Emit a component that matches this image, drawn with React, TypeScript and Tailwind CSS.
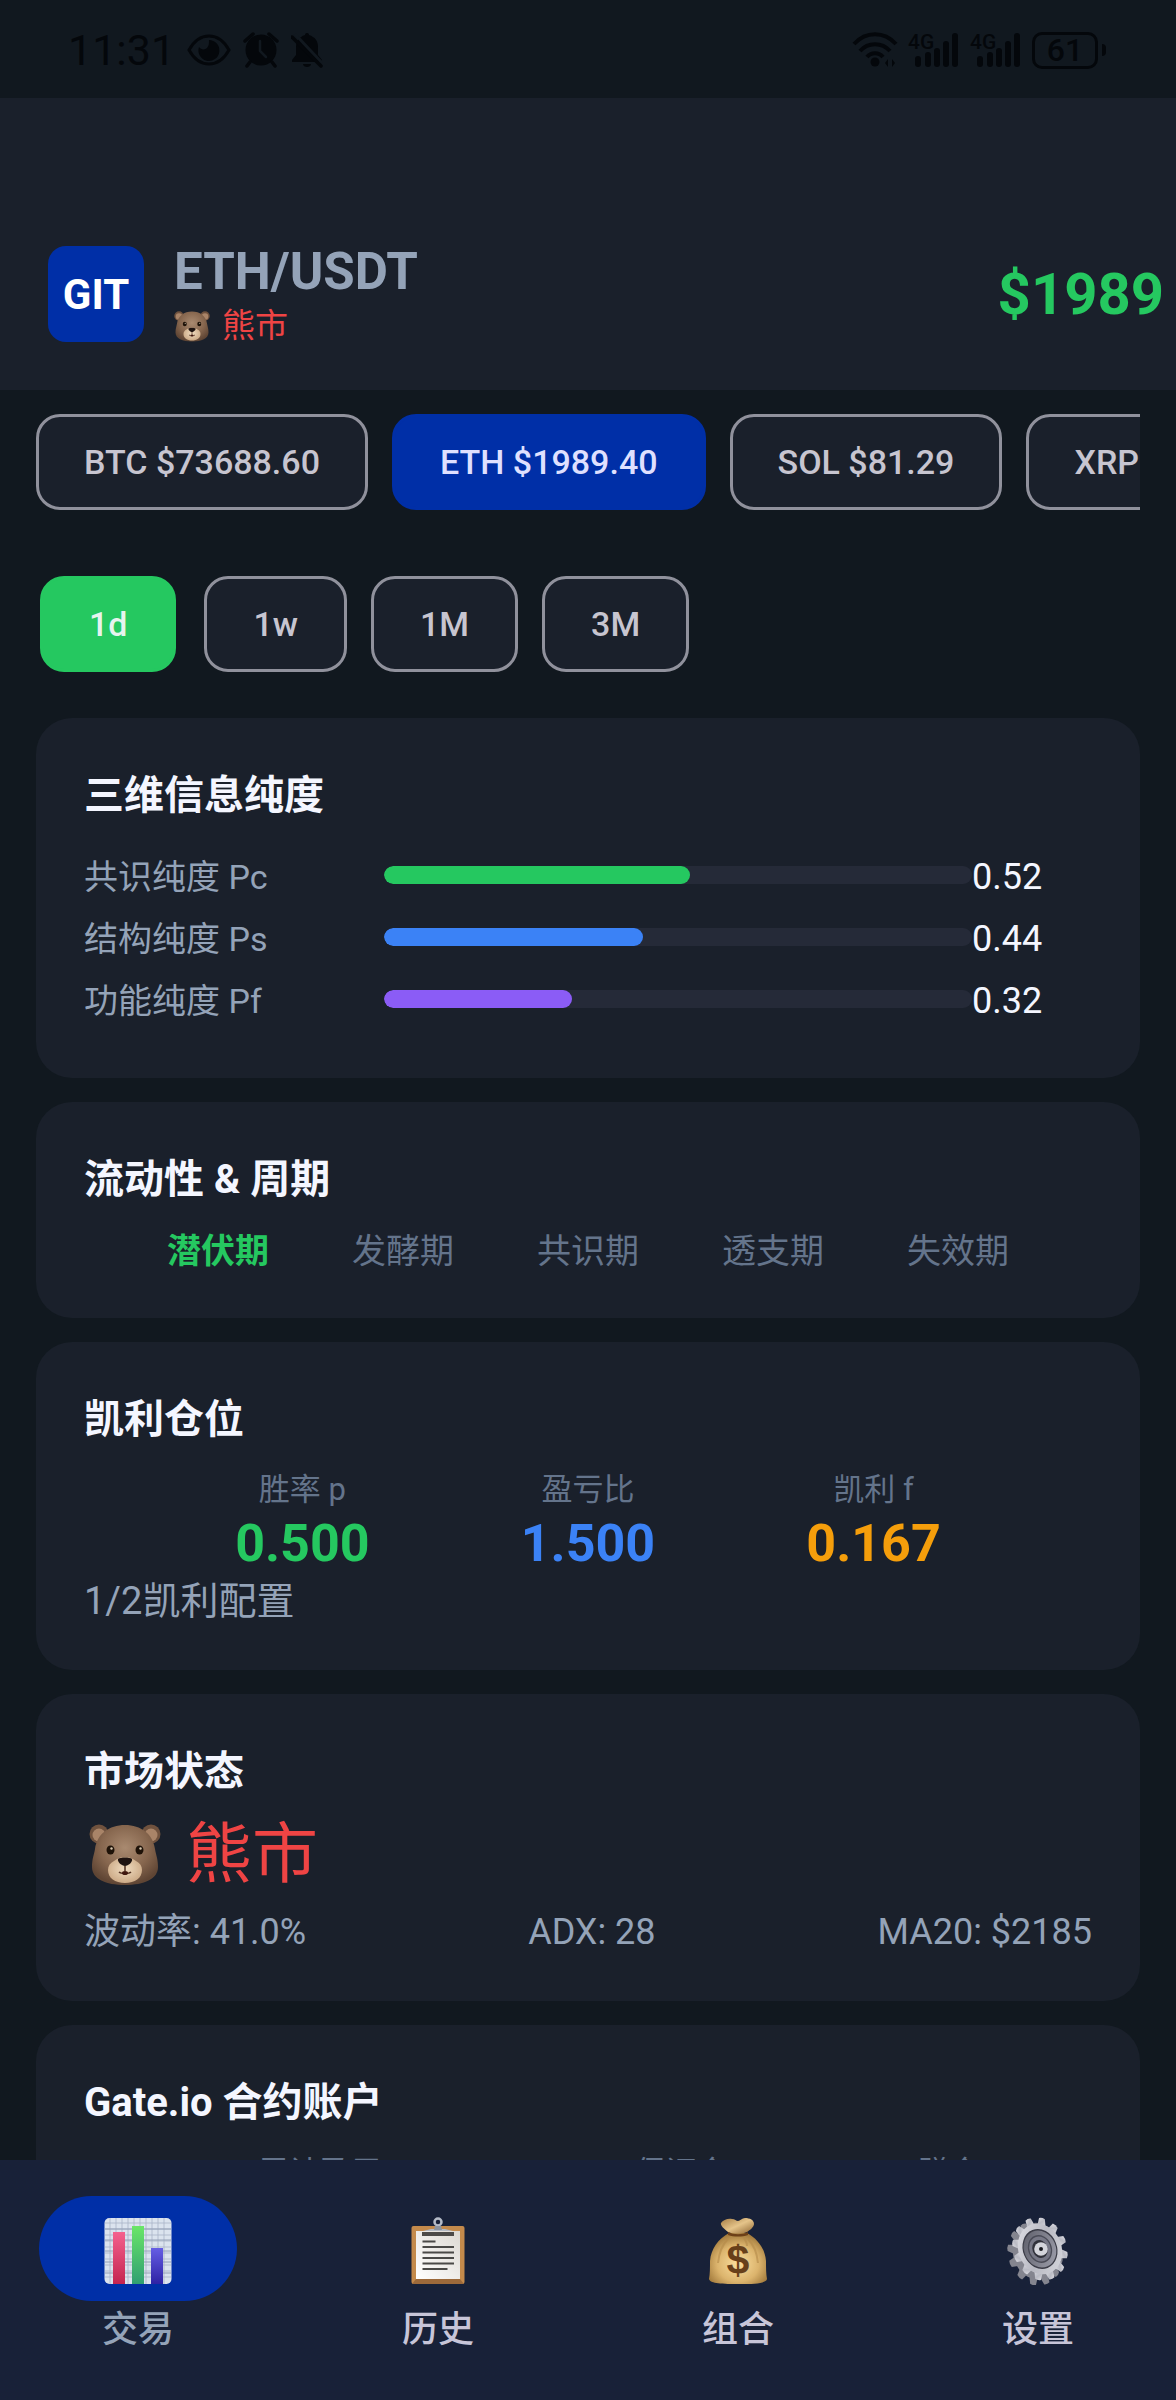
import { useId, useState } from "react";
import { clsx } from "clsx";

const coins = [
  { symbol: "BTC", price: "73688.60" },
  { symbol: "ETH", price: "1989.40" },
  { symbol: "SOL", price: "81.29" },
  { symbol: "XRP", price: "1.35" },
];

const periods = ["1d", "1w", "1M", "3M"];

const purity = [
  { label: "共识纯度 Pc", value: 0.52, color: "bg-[#25c860]" },
  { label: "结构纯度 Ps", value: 0.44, color: "bg-[#3b82f6]" },
  { label: "功能纯度 Pf", value: 0.32, color: "bg-[#8b5cf6]" },
];

const phases = ["潜伏期", "发酵期", "共识期", "透支期", "失效期"];

const kelly = [
  { label: "胜率 p", value: "0.500", color: "text-[#25c860]" },
  { label: "盈亏比", value: "1.500", color: "text-[#3b82f6]" },
  { label: "凯利 f", value: "0.167", color: "text-[#f59e0b]" },
];

function BearIcon({ className }: { className?: string }) {
  const id = useId();
  return (
    <svg viewBox="0 0 72 62" className={className} aria-hidden="true">
      <defs>
        <radialGradient id={`${id}f`} cx="50%" cy="38%" r="62%">
          <stop offset="0" stopColor="#a98a70" />
          <stop offset="0.6" stopColor="#86664e" />
          <stop offset="1" stopColor="#5f4534" />
        </radialGradient>
        <radialGradient id={`${id}m`} cx="50%" cy="45%" r="60%">
          <stop offset="0" stopColor="#f0dcc0" />
          <stop offset="1" stopColor="#c9a682" />
        </radialGradient>
      </defs>
      <circle cx="10" cy="10" r="9.5" fill="#70523e" />
      <circle cx="62" cy="10" r="9.5" fill="#70523e" />
      <circle cx="10" cy="11" r="6.5" fill="#a98468" />
      <circle cx="62" cy="11" r="6.5" fill="#a98468" />
      <path
        d="M36 1C52 1 64 10 66 25c1 6 3 10 3 18 0 12-14 18-33 18S3 55 3 43c0-8 2-12 3-18C8 10 20 1 36 1z"
        fill={`url(#${id}f)`}
      />
      <path
        d="M36 33c5 0 8 2 11 4 4 2 6 5 6 9 0 8-7 13-17 13s-17-5-17-13c0-4 2-7 6-9 3-2 6-4 11-4z"
        fill={`url(#${id}m)`}
      />
      <path d="M29 35c2-2 12-2 14 0 1 3-4 7-7 7s-8-4-7-7z" fill="#1e1310" />
      <path d="M36 42v5M30 48c2 2 10 2 12 0" stroke="#503020" strokeWidth="1.5" fill="none" />
      <ellipse cx="36" cy="49" rx="3" ry="2" fill="#40180f" />
      <ellipse cx="21.500" cy="26" rx="4" ry="4.500" fill="#1e1208" />
      <ellipse cx="50.500" cy="26" rx="4" ry="4.500" fill="#1e1208" />
      <circle cx="22.500" cy="24.500" r="1.200" fill="#d8c8b0" />
      <circle cx="51.500" cy="24.500" r="1.200" fill="#d8c8b0" />
    </svg>
  );
}

function ChartIcon() {
  const lines = [6, 12, 18, 24, 30, 36, 42, 48, 54, 60];
  return (
    <svg viewBox="0 0 68 68" className="size-[68px]" aria-hidden="true">
      <defs>
        <linearGradient id="chart-red" x2="0" y2="1">
          <stop offset="0" stopColor="#f4628e" />
          <stop offset="1" stopColor="#c42450" />
        </linearGradient>
        <linearGradient id="chart-green" x2="0" y2="1">
          <stop offset="0" stopColor="#6ae668" />
          <stop offset="1" stopColor="#2f9f72" />
        </linearGradient>
        <linearGradient id="chart-blue" x2="0" y2="1">
          <stop offset="0" stopColor="#665ee4" />
          <stop offset="1" stopColor="#2d22a4" />
        </linearGradient>
      </defs>
      <rect x="0.500" y="1" width="67" height="66" rx="5" fill="#dbe3ee" />
      {lines.map((n) => (
        <path key={n} d={`M${n} 1v66M1 ${n}h66`} stroke="#a9b4c6" strokeWidth="0.8" />
      ))}
      <path d="M1 12h66M1 23h66M1 34h66M1 45h66M1 56h66" stroke="#94a0b6" />
      <rect x="9" y="15" width="12" height="52" fill="url(#chart-red)" />
      <rect x="28" y="9" width="12" height="58" fill="url(#chart-green)" />
      <rect x="47" y="31" width="12" height="36" fill="url(#chart-blue)" />
    </svg>
  );
}

function ClipboardIcon() {
  return (
    <svg viewBox="0 0 68 68" className="size-[68px]" aria-hidden="true">
      <defs>
        <linearGradient id="clip-paper" x1="0" y1="1" x2="1" y2="0">
          <stop offset="0" stopColor="#ffffff" />
          <stop offset="1" stopColor="#dcd8d2" />
        </linearGradient>
      </defs>
      <rect x="7.500" y="9" width="53" height="58" rx="2" fill="#c48a4b" />
      <path d="M8 67l4-5h44l4 5z" fill="#9c693a" />
      <rect x="12" y="14" width="44" height="48" fill="url(#clip-paper)" />
      <rect x="18" y="15" width="32" height="4" fill="#4c4a48" />
      <path d="M19 14l8-2h14l8 2z" fill="#b4bac4" />
      <circle cx="34" cy="5" r="3.500" fill="none" stroke="#b6bcc8" strokeWidth="2.500" />
      <path d="M31 9h6l1 4h-8z" fill="#8d949f" />
      <path
        d="M18.500 24.500h13M18.500 30h31.500M18.500 35.500h31.500M18.500 41h31.500M18.500 46.500h31.500M18.500 52h25"
        stroke="#4a4947"
        strokeWidth="2"
      />
    </svg>
  );
}

function MoneyBagIcon() {
  return (
    <svg viewBox="0 0 68 68" className="size-[68px]" aria-hidden="true">
      <defs>
        <radialGradient id="bag-body" cx="50%" cy="60%" r="60%">
          <stop offset="0" stopColor="#fbdf9f" />
          <stop offset="0.6" stopColor="#dcb46d" />
          <stop offset="1" stopColor="#a0783a" />
        </radialGradient>
        <linearGradient id="bag-top" x2="1" y2="1">
          <stop offset="0" stopColor="#a57c44" />
          <stop offset="0.5" stopColor="#e5c48a" />
          <stop offset="1" stopColor="#8f6632" />
        </linearGradient>
      </defs>
      <path
        d="M25 16C14 22 7 32 6 44c0 7 0 13-1 18 1 4 9 5 29 5s28-1 29-5c-1-5-1-11-1-18-1-12-8-22-19-28z"
        fill="url(#bag-body)"
      />
      <path
        d="M24 22c-6 6-9 14-10 24M44 22c6 6 9 14 10 24M38 18c3 4 5 7 5 11"
        stroke="#b48a4a"
        strokeWidth="2"
        fill="none"
        opacity="0.6"
      />
      <path
        d="M24 15c-4-3-8-7-7-9 2-3 7-5 11-4 3 0 4 2 6 2s4-3 7-3c5 0 9 2 9 6 0 3-4 6-7 8-5 2-14 2-19 0z"
        fill="url(#bag-top)"
      />
      <path d="M24 15c6 3 14 3 20 0v3c-6 2-14 2-20 0z" fill="#6d4018" />
      <text x="34" y="57" textAnchor="middle" fontSize="41" fontWeight="700" fill="#68401a" fontFamily="Liberation Sans, sans-serif">
        $
      </text>
    </svg>
  );
}

function GearIcon() {
  const teeth = Array.from({ length: 12 }, (_, i) => i * 30);
  const wheel = (fill: string) => (
    <g fill={fill}>
      {teeth.map((a) => (
        <path key={a} d="M-5-25l1.500-8q3.500-1.500 7 0l1.500 8z" transform={`rotate(${a})`} />
      ))}
      <circle r="27" />
    </g>
  );
  return (
    <svg viewBox="0 0 68 68" className="size-[68px]" aria-hidden="true">
      <defs>
        <linearGradient id="gear-face" x2="1" y2="1">
          <stop offset="0" stopColor="#e2e2e8" />
          <stop offset="0.5" stopColor="#b9bac3" />
          <stop offset="1" stopColor="#d9dae0" />
        </linearGradient>
        <linearGradient id="gear-dish" x2="1" y2="1">
          <stop offset="0" stopColor="#5a5b66" />
          <stop offset="1" stopColor="#a2a3b0" />
        </linearGradient>
      </defs>
      <g transform="translate(31 37) rotate(-22) scale(0.8 0.960)">{wheel("#84858f")}</g>
      <g transform="translate(36 32) rotate(-22) scale(0.8 0.960)">
        {wheel("url(#gear-face)")}
        <circle r="20.500" fill="url(#gear-dish)" stroke="#3c3d48" strokeWidth="1.500" />
        <circle r="14" fill="#777886" stroke="#4a4b57" strokeWidth="1.500" />
        <circle r="9.500" fill="#30313a" />
      </g>
      <circle cx="37" cy="32" r="6.800" fill="#d4d5db" />
      <circle cx="37" cy="32" r="2" fill="#17181e" />
    </svg>
  );
}

const tabs = [
  { label: "交易", icon: <ChartIcon /> },
  { label: "历史", icon: <ClipboardIcon /> },
  { label: "组合", icon: <MoneyBagIcon /> },
  { label: "设置", icon: <GearIcon /> },
];

function SignalIcon() {
  return (
    <svg viewBox="0 0 52 36" className="h-9 w-[52px] overflow-visible" fill="currentColor" aria-hidden="true">
      <text x="0" y="17" fontSize="21" fontWeight="500" fontFamily="Roboto, sans-serif">
        4G
      </text>
      <rect x="7" y="24" width="6" height="11" rx="3" />
      <rect x="17" y="20" width="6" height="15" rx="3" />
      <rect x="26" y="16" width="6" height="19" rx="3" />
      <rect x="35" y="9" width="6" height="26" rx="3" />
      <rect x="44" y="1" width="6" height="34" rx="3" />
    </svg>
  );
}

function StatusBar() {
  return (
    <div className="flex h-[98px] shrink-0 items-center justify-between pt-0.5 pr-[70px] pl-[68px] text-[#04070b]">
      <div className="flex items-center gap-3">
        <span className="text-[43px] leading-none">11:31</span>
        <svg viewBox="0 0 44 32" className="h-8 w-11" aria-hidden="true">
          <path d="M2 16C7 7 14 2 22 2s15 5 20 14c-5 9-12 14-20 14S7 25 2 16z" fill="none" stroke="currentColor" strokeWidth="3" />
          <path d="M22 6a10.500 10.500 0 1 1-10 7c2 3 6 3 8 1s2-5 2-8z" fill="currentColor" />
        </svg>
        <svg viewBox="0 0 36 36" className="size-9" aria-hidden="true">
          <circle cx="18" cy="18" r="15.500" fill="currentColor" />
          <path d="M2 9l8-7M34 9l-8-7M7 30l-3 4M29 30l3 4" stroke="currentColor" strokeWidth="3.500" strokeLinecap="round" />
          <path d="M17 9v10l6 6" stroke="#11181f" strokeWidth="2.500" fill="none" strokeLinecap="round" />
        </svg>
        <svg viewBox="0 0 32 36" className="h-9 w-8" aria-hidden="true">
          <path d="M16 1c-2 0-2 2-2 2-6 2-9 6-9 12v8l-4 5v2h30v-2l-4-5v-8c0-6-3-10-9-12 0 0 0-2-2-2z" fill="currentColor" />
          <path d="M12 32h8c0 2-2 3-4 3s-4-1-4-3z" fill="currentColor" />
          <path d="M4 2l27 29" stroke="#11181f" strokeWidth="3" />
          <path d="M1 5l29 29" stroke="currentColor" strokeWidth="3.500" strokeLinecap="round" />
        </svg>
      </div>
      <div className="flex items-center gap-[10px]">
        <svg viewBox="0 0 46 36" className="h-9 w-[46px]" fill="none" stroke="currentColor" strokeWidth="4" aria-hidden="true">
          <path d="M2 12C14-1 32-1 44 12M8 19c8-9 22-9 30 0M15 25c4-5 12-5 16 0" />
          <circle cx="23" cy="30" r="4.500" fill="currentColor" stroke="none" />
          <path d="M33 31l3-4v8zM43 31l-3-4v8z" fill="currentColor" stroke="none" />
        </svg>
        <SignalIcon />
        <SignalIcon />
        <span className="flex items-center gap-1">
          <span className="flex h-[37px] w-[66px] items-center justify-center rounded-[10px] border-[3px] border-current text-[32px] leading-none font-medium">
            61
          </span>
          <span className="h-3 w-1 rounded-r bg-current" />
        </span>
      </div>
    </div>
  );
}

function Card({ title, children }: { title: string; children: React.ReactNode }) {
  return (
    <section className="rounded-[36px] bg-[#1a202b] px-12 pt-[50px] pb-[46px]">
      <h2 className="mb-[22px] text-[40px] leading-[56px] font-bold text-[#f4f6ff]">{title}</h2>
      {children}
    </section>
  );
}

export default function App() {
  const [coin, setCoin] = useState("ETH");
  const [period, setPeriod] = useState("1d");
  const [tab, setTab] = useState("交易");

  return (
    <div className="flex h-screen flex-col overflow-hidden bg-[#11181f] font-[Roboto,'Noto_Sans_CJK_SC',sans-serif] text-[34px]">
      <StatusBar />

      <header className="flex shrink-0 items-center bg-[#1a202b] pt-[140px] pr-3 pb-10 pl-12">
        <div className="flex size-24 items-center justify-center rounded-[18px] bg-[#002fa7] text-[42px] font-bold text-white">
          GIT
        </div>
        <div className="ml-[30px] flex-1 pt-1">
          <h1 className="text-[51px] leading-[60px] font-bold text-[#94a3b8]">ETH/USDT</h1>
          <p className="flex items-center gap-3 text-[33px] leading-[48px] text-[#ef4444]">
            <BearIcon className="h-[31px] w-9" />
            熊市
          </p>
        </div>
        <span className="text-[58px] leading-[64px] font-bold text-[#25c860]">$1989</span>
      </header>

      <main className="min-h-0 flex-1 overflow-y-auto px-9 [scrollbar-width:none]">
        <div className="flex gap-6 overflow-x-auto py-6 [scrollbar-width:none]">
          {coins.map((c) => (
            <button
              key={c.symbol}
              onClick={() => setCoin(c.symbol)}
              className={clsx(
                "h-24 shrink-0 rounded-[24px] border-[3px] px-[45px] font-medium whitespace-nowrap",
                coin === c.symbol
                  ? "border-[#002fa7] bg-[#002fa7] text-[#dfe0ff]"
                  : "border-[#90919c] bg-[#1a202b] text-[#c7c5d0]"
              )}
            >
              {c.symbol} ${c.price}
            </button>
          ))}
        </div>

        <div className="mt-[18px] flex gap-6 py-6">
          {periods.map((p) => (
            <button
              key={p}
              onClick={() => setPeriod(p)}
              className={clsx(
                "h-24 rounded-[24px] border-[3px] px-[46px] font-medium",
                period === p
                  ? "mx-1 border-[#25c860] bg-[#25c860] text-[#e6f4ee]"
                  : "border-[#90919c] bg-[#1a202b] text-[#c7c5d0]"
              )}
            >
              {p}
            </button>
          ))}
        </div>

        <div className="mt-[22px] flex flex-col gap-6 pb-6">
          <Card title="三维信息纯度">
            {purity.map((row) => (
              <div key={row.label} className="flex h-[62px] items-center">
                <span className="w-[300px] text-[#94a3b8]">{row.label}</span>
                <div className="mb-1 h-[18px] flex-1 overflow-hidden rounded-full bg-[#252a38]">
                  <div
                    className={clsx("h-full rounded-full", row.color)}
                    style={{ width: `${row.value * 100}%` }}
                  />
                </div>
                <span className="w-[120px] text-[36px] text-[#f4f6ff]">{row.value.toFixed(2)}</span>
              </div>
            ))}
          </Card>

          <Card title="流动性 & 周期">
            <div className="flex justify-evenly leading-[42px]">
              {phases.map((phase, i) => (
                <span key={phase} className={i === 0 ? "font-bold text-[#25c860]" : "text-[#64748b]"}>
                  {phase}
                </span>
              ))}
            </div>
          </Card>

          <Card title="凯利仓位">
            <div className="flex justify-evenly text-center">
              {kelly.map((k) => (
                <div key={k.label}>
                  <p className="text-[31px] leading-10 text-[#64748b]">{k.label}</p>
                  <p className={clsx("text-[52px] leading-[68px] font-bold", k.color)}>{k.value}</p>
                </div>
              ))}
            </div>
            <p className="text-[38px] leading-[46px] text-[#94a3b8]">1/2凯利配置</p>
          </Card>

          <Card title="市场状态">
            <p className="mb-[22px] flex items-center gap-6 pl-1 text-[66px] leading-[66px] text-[#ef4444]">
              <BearIcon className="h-[62px] w-[74px]" />
              熊市
            </p>
            <div className="flex justify-between text-[36px] leading-[45px] text-[#94a3b8]">
              <span>波动率: 41.0%</span>
              <span>ADX: 28</span>
              <span>MA20: $2185</span>
            </div>
          </Card>

          <Card title="Gate.io 合约账户">
            <div className="flex justify-evenly text-center text-[31px] leading-10 text-[#64748b]">
              <span className="w-[300px]">累计盈亏</span>
              <span className="w-[250px]">保证金</span>
              <span className="w-[114px]">赠金</span>
            </div>
          </Card>
        </div>
      </main>

      <nav className="flex h-60 shrink-0 gap-6 bg-[#182138] pt-9">
        {tabs.map((t) => (
          <button key={t.label} onClick={() => setTab(t.label)} className="flex flex-1 flex-col items-center">
            <span
              className={clsx(
                "flex h-[105px] w-[198px] items-center justify-center rounded-full pt-1",
                tab === t.label && "bg-[#002fa7]"
              )}
            >
              {t.icon}
            </span>
            <span
              className={clsx(
                "text-[36px] leading-[58px] font-medium",
                tab === t.label ? "text-[#94a3b8]" : "text-[#c7c5d8]"
              )}
            >
              {t.label}
            </span>
          </button>
        ))}
      </nav>
    </div>
  );
}
